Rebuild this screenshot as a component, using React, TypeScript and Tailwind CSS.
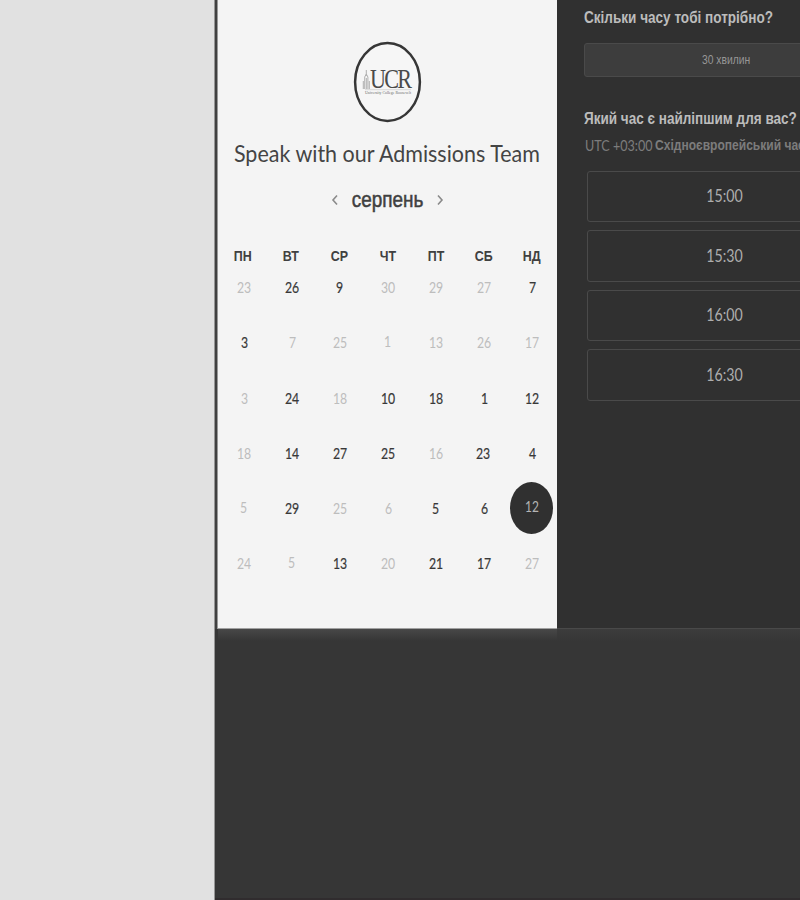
import { ReactNode } from "react";

const weekdays = ["ПН", "ВТ", "СР", "ЧТ", "ПТ", "СБ", "НД"];

type Day = { n: number; on?: boolean; selected?: boolean; nudge?: string };

const on = (n: number, nudge?: string): Day => ({ n, on: true, nudge });
const off = (n: number, nudge?: string): Day => ({ n, nudge });

const weeks: Day[][] = [
  [off(23), on(26), on(9, "-translate-x-px"), off(30), off(29), off(27), on(7)],
  [on(3), off(7), off(25), off(1, "-translate-x-px -translate-y-px"), off(13), off(26), off(17)],
  [off(3), on(24), off(18), on(10), on(18), on(1), on(12)],
  [off(18), on(14), on(27), on(25), off(16), on(23, "-translate-x-px"), on(4)],
  [off(5, "-translate-x-px -translate-y-px"), on(29), off(25), off(6), on(5, "-translate-x-px"), on(6), { n: 12, selected: true }],
  [off(24), off(5, "-translate-x-px -translate-y-px"), on(13), off(20), on(21), on(17), off(27)],
];

const times = ["15:00", "15:30", "16:00", "16:30"];

const lato = "font-['Lato','Liberation_Sans',sans-serif]";

function Line({ className, children }: { className: string; children: ReactNode }) {
  return <div className={`whitespace-nowrap ${className}`}>{children}</div>;
}

function Logo() {
  return (
    <svg width="69" height="82" viewBox="0 0 69 82" className="shrink-0">
      <ellipse cx="34.5" cy="41" rx="32.4" ry="38.9" fill="#f6f6f6" stroke="#363636" strokeWidth="2.5" />
      <path d="M13.3 29v6M11.7 48V36l1.6-3 1.6 3v12M10.3 48v-8M16.3 48v-8M13.3 37v11" fill="none" stroke="#b0b0b0" strokeWidth="1" />
      <text
        x="0"
        y="0"
        transform="translate(17 47) scale(.82 1)"
        fontSize="27"
        letterSpacing="-2.2"
        fill="#4a4a4a"
        fontFamily="Liberation Serif, serif"
      >
        UCR
      </text>
      <path d="M12 48.7H58" stroke="#c4c4c4" strokeWidth=".6" />
      <text x="12" y="52.5" fontSize="3.5" fill="#666" fontFamily="Liberation Serif, serif" textLength="46" lengthAdjust="spacingAndGlyphs">
        University College Roosevelt
      </text>
    </svg>
  );
}

function Chevron({ d }: { d: string }) {
  return (
    <svg width="8" height="12" viewBox="0 0 8 12" fill="none" stroke="#8a8a8a" strokeWidth="1.6">
      <path d={d} />
    </svg>
  );
}

function DayCell({ day }: { day: Day }) {
  if (day.selected) {
    return (
      <div className="flex items-center justify-center">
        <div className="-mt-[2px] flex h-[52px] w-[43px] shrink-0 items-center justify-center rounded-[50%] bg-[#303030] text-[#b4b4b4]">
          <span className="-translate-y-px scale-x-[.77]">{day.n}</span>
        </div>
      </div>
    );
  }
  return (
    <div
      className={`flex items-center justify-center pl-px ${
        day.on ? "text-[#383838] [-webkit-text-stroke:0.2px_#383838]" : "text-[#bdbdbd]"
      }`}
    >
      <span className={day.nudge}>
        <span className="inline-block scale-x-[.79]">{day.n}</span>
      </span>
    </div>
  );
}

function Calendar() {
  return (
    <section className="flex h-[629px] w-[339px] shrink-0 flex-col items-center border-b border-[#a0a0a0] bg-[#f4f4f4] pt-[41px]">
      <Logo />
      <Line className={`mt-[14px] mr-[2px] h-8 origin-center scale-x-[.895] text-[24px] leading-8 text-[#444] ${lato}`}>
        Speak with our Admissions Team
      </Line>
      <div className="mt-[15px] flex h-8 items-center justify-center">
        <Chevron d="M6 1.5L2 6l4 4.5" />
        <div className="flex w-[97px] justify-center">
          <Line className="scale-x-[.86] font-['Liberation_Sans',sans-serif] text-[22px] leading-8 text-[#404040] [-webkit-text-stroke:0.5px_#404040]">
            серпень
          </Line>
        </div>
        <Chevron d="M2 1.5L6 6l-4 4.5" />
      </div>
      <div className="mt-[30px] grid w-[337px] grid-cols-7 font-['Liberation_Sans',sans-serif] text-[15px] leading-5 font-bold text-[#404040]">
        {weekdays.map((d) => (
          <div key={d} className="flex justify-center">
            <span className="scale-x-[.83]">{d}</span>
          </div>
        ))}
      </div>
      <div className={`-mt-[6px] grid w-[336px] auto-rows-[55.25px] grid-cols-7 text-[15.5px] ${lato}`}>
        {weeks.flat().map((day, i) => (
          <DayCell key={i} day={day} />
        ))}
      </div>
    </section>
  );
}

function Scheduler() {
  return (
    <section className="flex h-[629px] w-[340px] shrink-0 flex-col border-b border-[#494949] bg-[#303030] pt-[7px] pl-[27px] font-['Liberation_Sans',sans-serif]">
      <Line className="h-[22px] origin-left scale-x-[.847] text-[16px] leading-[22px] font-bold text-[#bcbcbc]">
        Скільки часу тобі потрібно?
      </Line>
      <div className="mt-[14px] flex h-[34px] w-[284px] items-center justify-center rounded-[3px] border border-[#4a4a4a] bg-[#3d3d3d] text-[12px] text-[#979797]">
        <span className="scale-x-[.86]">30 хвилин</span>
      </div>
      <Line className="mt-[31px] h-[22px] origin-left scale-x-[.845] text-[16px] leading-[22px] font-bold text-[#bcbcbc]">
        Який час є найліпшим для вас?
      </Line>
      <div className="mt-[4px] flex h-[22px] items-center pl-px text-[#7c7c7c]">
        <Line className={`w-[70px] origin-left scale-x-[.84] text-[15px] ${lato}`}>UTC +03:00</Line>
        <Line className="origin-left scale-x-[.86] text-[14px] font-bold">Східноєвропейський час</Line>
      </div>
      <div className="mt-[14.5px] ml-[3px] flex w-[275px] flex-col gap-2">
        {times.map((t) => (
          <div key={t} className={`flex h-[51.5px] items-center justify-center rounded-[3px] border border-[#4a4a4a] text-[17.5px] text-[#adadad] ${lato}`}>
            <span className="scale-x-[.81]">{t}</span>
          </div>
        ))}
      </div>
    </section>
  );
}

export default function App() {
  return (
    <div className="flex h-[900px] w-[800px] overflow-hidden bg-[#363636]">
      <aside className="w-[215px] shrink-0 border-r border-[#969696] bg-[#e1e1e1]" />
      <main className="flex min-w-0 flex-1 flex-col overflow-hidden border-b-2 border-[#302c2e]">
        <div className="flex">
          <div className="w-[3px] shrink-0 border-r border-[#999] bg-[#404040]" />
          <Calendar />
          <Scheduler />
        </div>
        <div className="flex h-3 shrink-0">
          <div className="ml-[3px] w-[339px] bg-linear-to-b from-[#484848] to-[#363636]" />
          <div className="flex-1 bg-linear-to-b from-[#3c3c3c] to-[#363636]" />
        </div>
      </main>
    </div>
  );
}
